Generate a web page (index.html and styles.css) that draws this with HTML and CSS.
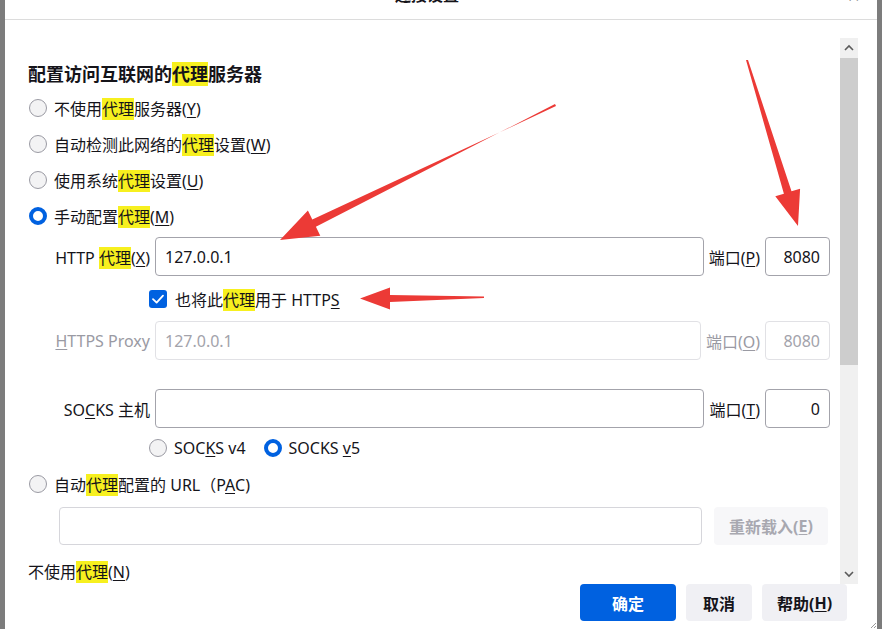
FILE: index.html
```html
<!DOCTYPE html>
<html lang="zh-CN">
<head>
<meta charset="utf-8">
<title>连接设置</title>
<link rel="stylesheet" href="styles.css">
</head>
<body>
<div class="window">
  <div class="titlebar">
    <span class="title">连接设置</span>
    <span class="close">✕</span>
  </div>
  <div class="main">
    <div class="content">
      <h1 class="heading">配置访问互联网的<mark>代理</mark>服务器</h1>

      <div class="radio-group">
        <div class="radio-row"><span class="radio"></span><span>不使用<mark>代理</mark>服务器(<u>Y</u>)</span></div>
        <div class="radio-row"><span class="radio"></span><span>自动检测此网络的<mark>代理</mark>设置(<u>W</u>)</span></div>
        <div class="radio-row"><span class="radio"></span><span>使用系统<mark>代理</mark>设置(<u>U</u>)</span></div>
        <div class="radio-row"><span class="radio checked"></span><span>手动配置<mark>代理</mark>(<u>M</u>)</span></div>
      </div>

      <div class="field-row">
        <span class="field-label">HTTP <mark>代理</mark>(<u>X</u>)</span>
        <input class="text-input" type="text" value="127.0.0.1">
        <span class="port-label">端口(<u>P</u>)</span>
        <input class="text-input port" type="text" value="8080">
      </div>

      <div class="check-row">
        <span class="checkbox">
          <svg viewBox="0 0 18 18" width="18" height="18"><path d="M4 9.2 L7.6 12.6 L14 5.6" fill="none" stroke="#fff" stroke-width="1.8" stroke-linecap="round" stroke-linejoin="round"/></svg>
        </span>
        <span>也将此<mark>代理</mark>用于 HTTP<u>S</u></span>
      </div>

      <div class="field-row disabled">
        <span class="field-label"><u>H</u>TTPS Proxy</span>
        <input class="text-input" type="text" value="127.0.0.1" disabled>
        <span class="port-label">端口(<u>O</u>)</span>
        <input class="text-input port" type="text" value="8080" disabled>
      </div>

      <div class="field-row socks">
        <span class="field-label">SO<u>C</u>KS 主机</span>
        <input class="text-input" type="text" value="">
        <span class="port-label">端口(<u>T</u>)</span>
        <input class="text-input port" type="text" value="0">
      </div>

      <div class="version-row">
        <span class="radio"></span><span class="ver-label">SOC<u>K</u>S v4</span>
        <span class="radio checked"></span><span class="ver-label">SOCKS <u>v</u>5</span>
      </div>

      <div class="radio-row pac"><span class="radio"></span><span>自动<mark>代理</mark>配置的 URL（P<u>A</u>C)</span></div>

      <div class="pac-row">
        <input class="text-input pac-input" type="text" value="">
        <span class="reload-btn">重新载入(<u>E</u>)</span>
      </div>

      <div class="noproxy">不使用<mark>代理</mark>(<u>N</u>)</div>
    </div>
    <div class="scrollbar">
      <div class="sb-btn">
        <svg viewBox="0 0 18 20" width="18" height="20"><path d="M5 12 L9 8 L13 12" fill="none" stroke="#5a5a5a" stroke-width="1.6"/></svg>
      </div>
      <div class="sb-thumb"></div>
      <div class="sb-track"></div>
      <div class="sb-btn">
        <svg viewBox="0 0 18 20" width="18" height="20"><path d="M5 8 L9 12 L13 8" fill="none" stroke="#5a5a5a" stroke-width="1.6"/></svg>
      </div>
    </div>
  </div>
  <div class="footer">
    <span class="btn primary">确定</span>
    <span class="btn cancel">取消</span>
    <span class="btn help">帮助(<u>H</u>)</span>
  </div>
  <svg class="grip" viewBox="0 0 8 8" width="8" height="8"><path d="M7 2 L2 7 M7 5 L5 7" stroke="#9a9a9a" stroke-width="1"/></svg>
</div>

<svg class="annotations" viewBox="0 0 882 629" width="882" height="629">
  <polygon fill="#ec3a36" points="555,104 556,106 312.3,219.6 307.9,210.6 280,240 320.3,235.8 315.9,226.8"/>
  <polygon fill="#ec3a36" points="746,60 748,60 791.5,191.3 800.1,188.7 798,226 775.3,196.3 783.9,193.7"/>
  <polygon fill="#ec3a36" points="484,296.5 484,298 390,302 390,309.5 360,298.5 390,287.5 390,295"/>
</svg>
</body>
</html>
```

FILE: styles.css
```css
* { box-sizing: border-box; }

html, body {
  margin: 0;
  padding: 0;
  background: #ffffff;
}

body {
  width: 882px;
  height: 629px;
  overflow: hidden;
  font-family: "Noto Sans", "Noto Sans CJK SC", sans-serif;
  font-size: 16px;
  color: #15141a;
  position: relative;
}

mark {
  background: #f7f01f;
  color: inherit;
}

u { text-decoration-thickness: 1px; text-underline-offset: 2px; }

.window {
  width: 882px;
  height: 629px;
  border-left: 5px solid #7c7c7c;
  border-right: 5px solid #7c7c7c;
  background: #fff;
  display: flex;
  flex-direction: column;
  position: relative;
}

.titlebar {
  height: 20px;
  border-bottom: 1px solid #dcdcdc;
  display: flex;
  align-items: flex-start;
  overflow: hidden;
  flex-shrink: 0;
}

.title {
  margin-left: 390px;
  margin-top: -15px;
  font-size: 16px;
  font-weight: 700;
  line-height: 20px;
}

.close {
  margin-left: auto;
  margin-right: 17px;
  margin-top: -13px;
  font-size: 16px;
  line-height: 18px;
  color: #333;
}

.main {
  height: 564px;
  display: flex;
  flex-shrink: 0;
}

.content {
  flex: 1;
  padding: 39px 10px 0 23px;
  overflow: hidden;
}

.heading {
  margin: 0 0 1px;
  height: 30px;
  line-height: 30px;
  font-size: 18px;
  font-weight: 700;
}

.radio-group { margin-bottom: 3px; }

.radio-row {
  height: 36px;
  display: flex;
  align-items: center;
  padding-left: 1px;
  white-space: nowrap;
}

.radio {
  width: 18px;
  height: 18px;
  border-radius: 50%;
  border: 1px solid #9a9aa3;
  background: #f3f3f4;
  margin-right: 7px;
  flex-shrink: 0;
}

.radio.checked {
  border: 4.5px solid #0061e0;
  background: #fff;
}

.field-row {
  display: flex;
  align-items: center;
  height: 39px;
  white-space: nowrap;
}

.field-label {
  width: 122px;
  text-align: right;
  margin-right: 5px;
  flex-shrink: 0;
}

.text-input {
  flex: 1;
  min-width: 0;
  height: 39px;
  border: 1px solid #a3a3ab;
  border-radius: 4px;
  padding: 0 9px;
  font-family: "Noto Sans", "Noto Sans CJK SC", sans-serif;
  font-size: 16px;
  color: #15141a;
  background: #fff;
  outline: none;
}

.text-input.port {
  flex: 0 0 65px;
  width: 65px;
  text-align: right;
}

.port-label {
  margin: 0 5px;
  flex-shrink: 0;
}

.field-row.disabled { color: #9a9aa3; }
.field-row.disabled .text-input {
  border-color: #e1e1e5;
  color: #a3a3ab;
}

.check-row {
  height: 45px;
  display: flex;
  align-items: center;
  padding-left: 121px;
  white-space: nowrap;
}

.checkbox {
  width: 18px;
  height: 18px;
  border-radius: 3px;
  background: #0061e0;
  margin-right: 8px;
  display: flex;
  flex-shrink: 0;
}

.field-row.socks { margin-top: 29px; }

.version-row {
  height: 40px;
  display: flex;
  align-items: center;
  padding-left: 121px;
  white-space: nowrap;
}

.ver-label { margin-right: 18px; }

.radio-row.pac { height: 32px; }

.pac-row {
  margin-top: 7px;
  padding-left: 31px;
  padding-right: 2px;
  display: flex;
  align-items: center;
  height: 38px;
}

.pac-input {
  height: 38px;
  border-color: #d6d6db;
}

.reload-btn {
  margin-left: 12px;
  width: 114px;
  height: 38px;
  border-radius: 4px;
  background: #f7f7f9;
  color: #a8a8b0;
  font-weight: 700;
  display: flex;
  align-items: center;
  justify-content: center;
  white-space: nowrap;
  flex-shrink: 0;
}

.noproxy {
  margin-top: 15px;
  height: 24px;
  line-height: 24px;
}

.scrollbar {
  width: 18px;
  margin-top: 18px;
  margin-right: 19px;
  display: flex;
  flex-direction: column;
  background: #f0f0f0;
  flex-shrink: 0;
}

.sb-btn { height: 20px; flex-shrink: 0; }
.sb-btn svg { display: block; }
.sb-thumb { height: 307px; background: #cdcdcd; flex-shrink: 0; }
.sb-track { flex: 1; }

.footer {
  height: 45px;
  display: flex;
  justify-content: flex-end;
  align-items: flex-start;
  gap: 10px;
  padding-right: 30px;
  flex-shrink: 0;
}

.btn {
  height: 37px;
  border-radius: 4px;
  background: #f0f0f4;
  font-weight: 700;
  display: flex;
  align-items: center;
  justify-content: center;
  white-space: nowrap;
}

.btn.primary { width: 96px; background: #0061e0; color: #fff; }
.btn.cancel { width: 66px; }
.btn.help { width: 85px; }

.grip {
  position: absolute;
  right: 0;
  bottom: 0;
}

.annotations {
  position: absolute;
  left: 0;
  top: 0;
  pointer-events: none;
}
```
